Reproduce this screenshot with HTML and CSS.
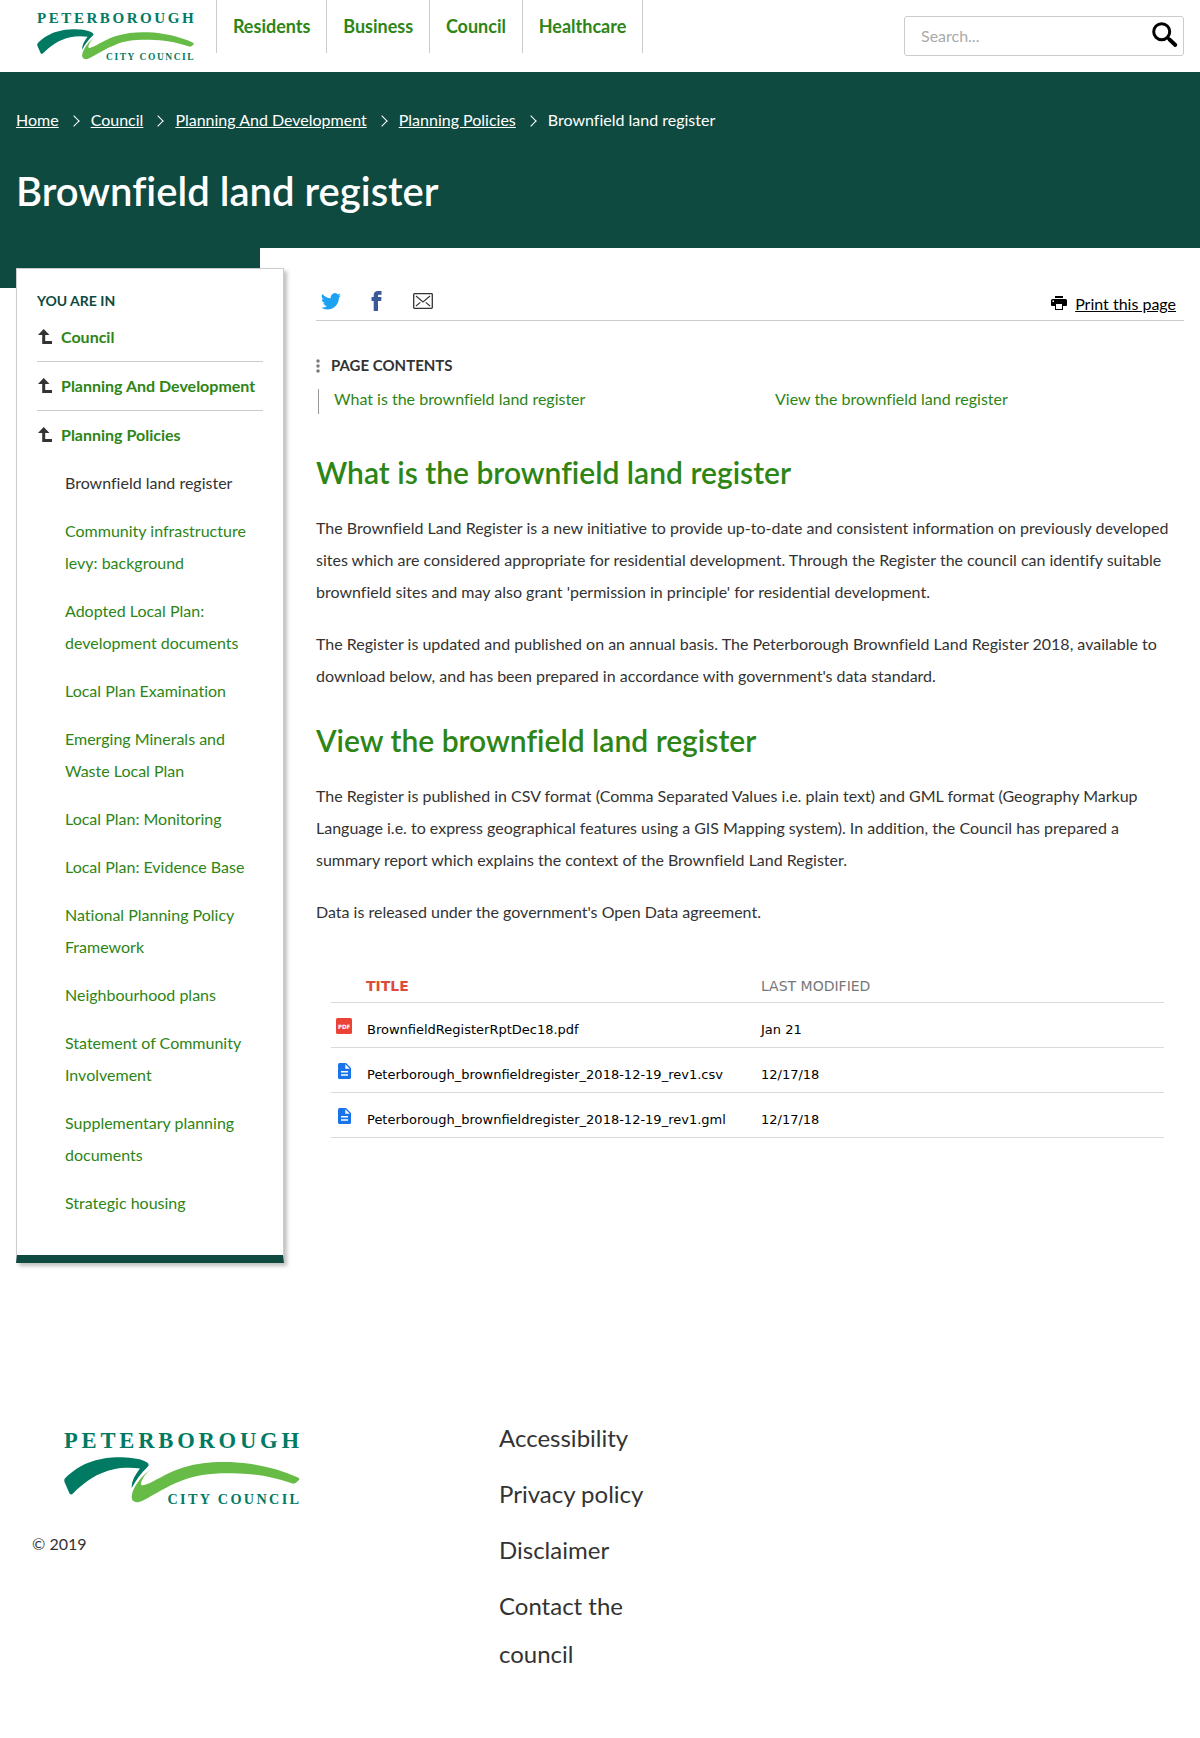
FILE: index.html
```html
<!DOCTYPE html>
<html lang="en">
<head>
<meta charset="utf-8">
<title>Brownfield land register</title>
<link rel="stylesheet" href="styles.css">
</head>
<body>
<svg class="defs" aria-hidden="true">
  <symbol id="logo" viewBox="0 0 237 76">
    <text x="0" y="17.600" font-size="22.6" textLength="235">PETERBOROUGH</text>
    <path fill="#007a63" d="M.8 48.6C8 41 18 34.500 28 31.500C40 27.500 50 27 58 27.300C68 27.700 78 29 83 32.500Q86 34.500 83.500 37C77 43 72 50 67.700 58C67.500 50 72 44 76 38.600C68 37.500 58 37.500 50 39.300C33 43 21 51.500 9 63.500Q7 65.500 5.500 63.500L.5 52Q-.2 50 .8 48.600Z"/>
    <path fill="#66bc46" d="M86.700 39C81 44 77 50 77 54.500C78 56.500 82 54.500 86 53C96 48 106 41.500 120 37.300C135 32.500 150 31.500 166 32C190 33 213 38 234 47.500Q236.500 48.500 234.500 50.500L231.500 53Q230 54 227 53C207 46.500 190 43.500 168 43.300C146 43 132 45 118 50.500C103 56 91 64.500 79 70.500C72 74 67.500 72 67.700 66.500C68.500 57 78 45.500 86.700 39Z"/>
    <text x="103.500" y="73.600" font-size="14.200" textLength="131.500">CITY COUNCIL</text>
  </symbol>
  <symbol id="up" viewBox="0 0 14 15"><path fill="#333" d="M5.700 0L11.500 6H7.200V12H14V15H4.200V6H0Z"/></symbol>
  <symbol id="doc" viewBox="0 0 13 16"><path fill="#1a73e8" d="M1.500 0H8L13 5V14.500Q13 16 11.500 16H1.500Q0 16 0 14.500V1.500Q0 0 1.500 0Z"/><path fill="#fff" d="M7.300 1.200V5.700H11.800ZM3 8H10V9.500H3ZM3 11.300H10V12.800H3Z"/></symbol>
</svg>
<header class="header">
  <a class="brand"><svg class="logo-small"><use href="#logo"/></svg></a>
  <nav class="nav"><a>Residents</a><a>Business</a><a>Council</a><a>Healthcare</a></nav>
  <div class="search"><span>Search...</span>
    <svg width="26" height="26" viewBox="0 0 26 26" fill="none" stroke="#000"><circle cx="9.700" cy="9.700" r="8" stroke-width="3"/><path d="M15.500 15.500L18 18" stroke-width="3"/><path d="M17.500 17.500L23.300 23" stroke-width="3.800" stroke-linecap="round"/></svg>
  </div>
</header>
<section class="hero">
  <div class="crumbs"><a>Home</a><i></i><a>Council</a><i></i><a>Planning And Development</a><i></i><a>Planning Policies</a><i></i><span>Brownfield land register</span></div>
  <h1>Brownfield land register</h1>
</section>
<div class="page">
  <aside class="sidebar">
    <h2>YOU ARE IN</h2>
    <ul class="parents">
      <li><svg><use href="#up"/></svg><a>Council</a></li>
      <li><svg><use href="#up"/></svg><a>Planning And Development</a></li>
      <li><svg><use href="#up"/></svg><a>Planning Policies</a></li>
    </ul>
    <ul class="children">
      <li class="current">Brownfield land register</li>
      <li>Community infrastructure levy: background</li>
      <li>Adopted Local Plan: development documents</li>
      <li>Local Plan Examination</li>
      <li>Emerging Minerals and Waste Local Plan</li>
      <li>Local Plan: Monitoring</li>
      <li>Local Plan: Evidence Base</li>
      <li>National Planning Policy Framework</li>
      <li>Neighbourhood plans</li>
      <li>Statement of Community Involvement</li>
      <li>Supplementary planning documents</li>
      <li>Strategic housing</li>
    </ul>
  </aside>
  <main class="main">
    <div class="share">
      <svg class="twitter" viewBox="0 0 24 20"><path fill="#1da1f2" d="M24 2.370a9.800 9.800 0 0 1-2.830.77A4.930 4.930 0 0 0 23.340.42a9.900 9.900 0 0 1-3.130 1.190A4.920 4.920 0 0 0 11.820 6.100 13.980 13.980 0 0 1 1.670.95a4.920 4.920 0 0 0 1.530 6.580A4.900 4.900 0 0 1 .96 6.900a4.930 4.930 0 0 0 3.950 4.900 4.900 4.900 0 0 1-2.220.080 4.930 4.930 0 0 0 4.600 3.420A9.880 9.880 0 0 1 0 17.340a13.940 13.940 0 0 0 7.550 2.210c9.140 0 14.300-7.720 13.980-14.640A10 10 0 0 0 24 2.370Z"/></svg>
      <svg class="facebook" viewBox="0 0 10 20"><path fill="#3b5998" d="M2.200 20V10H0V6H2.200V4.500C2.200 1.500 3.500 0 6.500 0H10V3.800H7.800C6.800 3.800 6.500 4.200 6.500 5V6H10L9.600 10H6.500V20Z"/></svg>
      <svg class="mail" viewBox="0 0 20 16" fill="none" stroke="#333"><rect x=".7" y=".7" width="18.600" height="14.600" rx=".8" stroke-width="1.300"/><path d="M3 3L10 9L17 3M3 13L7.300 9.300M17 13L12.700 9.300" stroke-width="1.100"/></svg>
      <a class="print"><svg viewBox="0 0 16 14"><path d="M4 0H12V2H4ZM1.500 3H14.500Q16 3 16 4.500V9Q16 10 15 10H12V14H4V10H1Q0 10 0 9V4.500Q0 3 1.500 3Z"/><path fill="#fff" d="M5 8H11V13H5ZM1.500 4.500H3V6H1.500Z"/></svg><span>Print this page</span></a>
    </div>
    <h3 class="toc-title"><svg viewBox="0 0 4 14" fill="#777"><circle cx="2" cy="2" r="1.700"/><circle cx="2" cy="7" r="1.700"/><circle cx="2" cy="12" r="1.700"/></svg>PAGE CONTENTS</h3>
    <div class="toc"><a>What is the brownfield land register</a><a>View the brownfield land register</a></div>
    <article class="article">
      <h2>What is the brownfield land register</h2>
      <p>The Brownfield Land Register is a new initiative to provide up-to-date and consistent information on previously developed sites which are considered appropriate for residential development. Through the Register the council can identify suitable brownfield sites and may also grant 'permission in principle' for residential development.</p>
      <p>The Register is updated and published on an annual basis. The Peterborough Brownfield Land Register 2018, available to download below, and has been prepared in accordance with government's data standard.</p>
      <h2>View the brownfield land register</h2>
      <p>The Register is published in CSV format (Comma Separated Values i.e. plain text) and GML format (Geography Markup Language i.e. to express geographical features using a GIS Mapping system). In addition, the Council has prepared a summary report which explains the context of the Brownfield Land Register.</p>
      <p>Data is released under the government's Open Data agreement.</p>
    </article>
    <div class="files">
      <div class="row head"><span></span><b>TITLE</b><span>LAST MODIFIED</span></div>
      <div class="row"><svg class="pdf" viewBox="0 0 16 16"><rect width="16" height="16" rx="1.500" fill="#ea4335"/><text x="2" y="10.500" textLength="12.300" lengthAdjust="spacingAndGlyphs">PDF</text></svg><span>BrownfieldRegisterRptDec18.pdf</span><span>Jan 21</span></div>
      <div class="row"><svg class="doc"><use href="#doc"/></svg><span>Peterborough_brownfieldregister_2018-12-19_rev1.csv</span><span>12/17/18</span></div>
      <div class="row"><svg class="doc"><use href="#doc"/></svg><span>Peterborough_brownfieldregister_2018-12-19_rev1.gml</span><span>12/17/18</span></div>
    </div>
  </main>
</div>
<footer class="footer">
  <div class="about"><svg class="logo-large"><use href="#logo"/></svg><p>© 2019</p></div>
  <ul class="links"><li>Accessibility</li><li>Privacy policy</li><li>Disclaimer</li><li>Contact the council</li></ul>
</footer>
</body>
</html>
```
FILE: styles.css
```css
* { box-sizing: border-box; }
body { margin: 0; height: 1738px; font: 16px/32px Lato, sans-serif; font-variant-ligatures: none; color: #333; background: #fff; overflow-x: hidden; }
h1, h2, h3, p, ul { margin: 0; padding: 0; }
ul { list-style: none; }
svg { display: block; flex: none; }
.defs { position: absolute; width: 0; height: 0; }
symbol { overflow: visible; }
symbol text { font-family: "Liberation Serif", serif; font-weight: bold; fill: #007a63; }

.header { display: flex; height: 72px; padding-right: 16px; }
.brand { width: 216px; padding: 11px 0 0 37px; }
.logo-small { width: 158px; height: 50.67px; overflow: visible; }
.nav { display: flex; height: 53px; border-left: 1px solid #ccc; }
.nav a { padding: 10px 15.9px 0; border-right: 1px solid #ccc; font-size: 18px; font-weight: 700; color: #2d8516; }
.search { display: flex; justify-content: space-between; width: 280px; height: 40px; margin: 16px 0 0 auto; padding: 4px 5px 0 16px; border: 1px solid #ccc; border-radius: 3px; color: #aaa; line-height: 30px; }
.search svg { margin-top: 1px; }

.hero { height: 176px; padding: 32px 16px 0; background: #0f4a40; color: #fff; }
.crumbs { display: flex; align-items: center; height: 32px; }
.crumbs a { text-decoration: underline; }
.crumbs i { width: 8px; height: 8px; margin: 2px 13px 0 11px; border: solid #fff; border-width: 1px 1px 0 0; transform: rotate(45deg); }
h1 { margin-top: 31px; font-size: 40px; line-height: 48px; font-weight: 600; }

.page { display: flex; align-items: flex-start; height: 1147px; padding: 0 16px; background: linear-gradient(#0f4a40, #0f4a40) 0 0 / 260px 40px no-repeat; }
.sidebar { width: 268px; margin-top: 20px; padding: 16px 20px 28px; background: #fff; border: 1px solid #ccc; border-bottom: 8px solid #0f4a40; box-shadow: 3px 3px 4px rgba(0,0,0,.25); }
.sidebar h2 { height: 28px; font-size: 14px; line-height: 32px; font-weight: 700; color: #0f4a40; }
.parents li { display: flex; align-items: center; height: 49px; border-bottom: 1px solid #ccc; font-weight: 700; color: #2d8516; }
.parents li:last-child { height: 48px; border: 0; }
.parents svg { width: 14px; height: 15px; margin: 0 9px 1px 1px; }
.children { padding-left: 28px; color: #2d8516; }
.children li { padding: 8px 0; }
.children .current { color: #333; }

.main { width: 868px; margin-left: 32px; }
.share { display: flex; height: 73px; border-bottom: 1px solid #ccc; }
.twitter { width: 20px; height: 17px; margin: 45px 0 0 5px; }
.facebook { width: 11px; height: 20px; margin: 43px 0 0 30px; }
.mail { width: 20px; height: 16px; margin: 45px 0 0 31px; }
.print { display: flex; margin: 40px 8px 0 auto; color: #000; text-decoration: underline; }
.print svg { width: 16px; height: 14px; margin: 8px 8px 0 0; }
.toc-title { display: flex; align-items: center; height: 32px; margin-top: 28px; font-size: 15px; font-weight: 700; }
.toc-title svg { width: 4px; height: 14px; margin: 2px 11px 0 0; }
.toc { display: grid; grid-template-columns: 441px 1fr; height: 25px; margin: 8px 0 0 2px; padding-left: 15px; border-left: 1px solid #999; line-height: 20px; color: #2d8516; }
.article { padding-top: 34px; }
.article h2 { height: 64px; padding-top: 6px; font-size: 30px; line-height: 36px; font-weight: 600; color: #2d8516; }
.article p { margin-bottom: 20px; }
.article p + h2 { height: 68px; padding-top: 10px; }
.files { margin: 40px 20px 0 15px; font: 13px/20px "DejaVu Sans", sans-serif; color: #000; }
.row { display: grid; grid-template-columns: 36px 394px 1fr; height: 45px; padding-top: 17px; border-bottom: 1px solid #dadada; }
.head { height: 35px; padding-top: 8px; font-size: 14px; color: #777; }
.head b { margin-left: -1px; font-size: 14px; color: #dd4b39; }
.pdf { width: 16px; height: 16px; margin: -2px 0 0 5px; }
.pdf text { font: bold 6px "DejaVu Sans", sans-serif; fill: #fff; }
.doc { width: 13px; height: 16px; margin: -2px 0 0 7px; }

.footer { display: flex; padding: 19px 32px 0; }
.about { width: 467px; padding-top: 16px; }
.logo-large { width: 237px; height: 76px; margin-left: 32px; overflow: visible; }
.about p { margin-top: 22px; }
.links { width: 150px; font-size: 24px; line-height: 48px; }
.links li { margin-bottom: 8px; }
```
